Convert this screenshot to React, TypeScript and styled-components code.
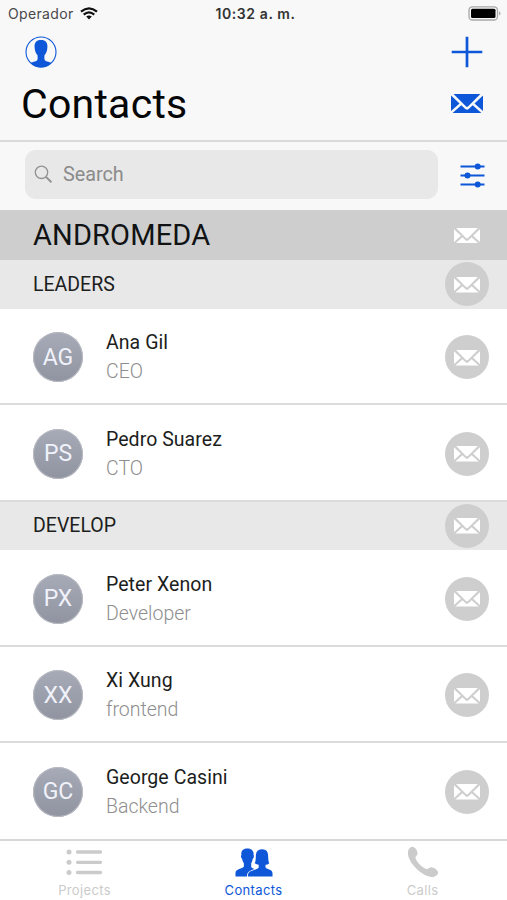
import React from "react";
import styled, { createGlobalStyle } from "styled-components";

const BLUE = "#0d57d8";

const GlobalStyle = createGlobalStyle`
  * { box-sizing: border-box; }
  body { margin: 0; background: #fff; font-family: Roboto, sans-serif; color: #1c1e20; }
`;

const Screen = styled.div`
  width: 507px;
  height: 900px;
  overflow: hidden;
  display: flex;
  flex-direction: column;
  background: #fff;
`;

const StatusBar = styled.div`
  flex: none;
  height: 28px;
  display: grid;
  grid-template-columns: 1fr auto 1fr;
  align-items: center;
  padding: 0 6px 1px 8px;
  background: #f8f8f8;
  font-family: Inter, sans-serif;
  font-size: 14px;
  color: #48484a;
`;

const Carrier = styled.div`
  display: flex;
  align-items: center;
  gap: 6px;
  letter-spacing: 0.35px;
`;

const Clock = styled.div`
  font-weight: 600;
  letter-spacing: 0.6px;
  color: #333;
  padding-left: 2px;
`;

const BatterySlot = styled.div`
  display: flex;
  justify-content: flex-end;
`;

const Header = styled.header`
  flex: none;
  height: 114px;
  background: #f8f8f8;
  border-bottom: 2px solid #dadada;
  padding: 8px 24px 0 21px;
`;

const HeaderRow = styled.div<{ $height: number }>`
  display: flex;
  align-items: center;
  justify-content: space-between;
  height: ${(p) => p.$height}px;
`;

const IconButton = styled.button<{ $inset?: number }>`
  display: flex;
  padding: 0;
  margin-left: ${(p) => p.$inset ?? 0}px;
  border: 0;
  background: none;
`;

const Title = styled.h1`
  margin: 0;
  font-size: 41px;
  line-height: 48px;
  font-weight: 400;
  letter-spacing: 0.25px;
  color: #050607;
`;

const SearchRow = styled.div`
  flex: none;
  height: 68px;
  display: flex;
  align-items: flex-start;
  justify-content: space-between;
  padding: 8px 22px 0 25px;
  background: #f8f8f8;
`;

const SearchField = styled.div`
  width: 413px;
  height: 49px;
  border-radius: 11px;
  background: #e8e8e8;
  display: flex;
  align-items: center;
  gap: 10px;
  padding: 0 9px;
  font-size: 19.8px;
  color: #8b8b8b;
`;

const FilterSlot = styled.div`
  padding-top: 12px;
`;

const Band = styled.div<{ $major?: boolean }>`
  flex: none;
  height: ${(p) => (p.$major ? 50 : 48.5)}px;
  display: flex;
  align-items: center;
  justify-content: space-between;
  padding: 0 18px 0 33px;
  background: ${(p) => (p.$major ? "#cecece" : "#e8e8e8")};
  font-size: ${(p) => (p.$major ? 29 : 19.5)}px;
  color: ${(p) => (p.$major ? "#101213" : "#1c1e20")};
`;

const Label = styled.span<{ $spacing?: number }>`
  letter-spacing: ${(p) => p.$spacing ?? 0}px;
`;

const MailButton = styled.button`
  width: 44px;
  height: 44px;
  flex: none;
  border: 0;
  padding: 1px 0 0;
  border-radius: 50%;
  background: #cecece;
  display: flex;
  align-items: center;
  justify-content: center;
`;

const ContactRow = styled.div`
  flex: none;
  height: 96.5px;
  display: flex;
  align-items: center;
  padding: 3px 18px 0 33px;
  border-bottom: 2px solid #dcdcdc;

  &:nth-last-child(2) {
    border-bottom-color: transparent;
  }
`;

const Avatar = styled.div`
  width: 50px;
  height: 50px;
  border-radius: 50%;
  display: flex;
  align-items: center;
  justify-content: center;
  background: linear-gradient(#a7abb7, #9094a0);
  box-shadow: inset 0 0 0 1px #b9bbc3;
  color: #f0f2fb;
  font-size: 23px;
`;

const Person = styled.div`
  flex: 1;
  padding-left: 23px;
  font-size: 19.5px;
  line-height: 29px;
`;

const Role = styled.div`
  font-weight: 300;
  color: #8e8e8e;
`;

const TabBar = styled.nav`
  flex: none;
  height: 62px;
  margin-top: -1px;
  border-top: 2px solid #d8d8d8;
  display: grid;
  grid-template-columns: repeat(3, 1fr);
  align-content: start;
  padding-top: 4px;
`;

const Tab = styled.div<{ $active?: boolean }>`
  display: flex;
  flex-direction: column;
  align-items: center;
  color: ${(p) => (p.$active ? BLUE : "#cbcbcb")};
  font-family: Inter, sans-serif;
  font-size: 13px;
  line-height: 18px;
  letter-spacing: 0.35px;
`;

const TabIcon = styled.div`
  height: 36px;
  display: flex;
  align-items: center;
  padding-bottom: 1px;
`;

const MailIcon = ({ width, color }: { width: number; color: string }) => (
  <svg width={width} height={width * 0.6} viewBox="0 0 32 19" fill={color}>
    <path d="M2.600 0H29.400L17.200 12.100Q16 13.100 14.800 12.100Z" />
    <path d="M0 1.400 8.500 9.400 0 17Z" />
    <path d="M32 1.400 23.500 9.400 32 17Z" />
    <path d="M1.600 19 10.300 11.200 14.300 14.900Q16 16.200 17.700 14.900L21.700 11.200 30.400 19Z" />
  </svg>
);

const WifiIcon = () => (
  <svg width="18" height="13" viewBox="0 0 18 13" fill="none" stroke="#111" strokeWidth="2.200">
    <path d="M1 4.700Q9-2 17 4.700M3.700 7.700Q9 3.200 14.300 7.700" />
    <path d="M6.200 9.500Q9 7.300 11.800 9.500L9 12.500Z" fill="#111" stroke="none" />
  </svg>
);

const BatteryIcon = () => (
  <svg width="33" height="15" viewBox="0 0 33 15">
    <rect x="1" y=".8" width="28.500" height="13.200" rx="3.500" fill="#f8f8f8" stroke="#a7a7a7" strokeWidth="1.300" />
    <rect x="3" y="2.800" width="24.500" height="9.200" rx="1.500" fill="#000" />
    <path d="M31 5.300Q34 7.400 31 9.500Z" fill="#aaa" />
  </svg>
);

const ProfileIcon = () => (
  <svg width="32" height="32" viewBox="0 0 32 32" fill={BLUE}>
    <circle cx="16" cy="16" r="15" fill="none" stroke={BLUE} strokeWidth="1.100" />
    <path d="M16 4C20.800 4 22.700 6.700 22.400 11.200C22.300 15 20.800 17.800 19.400 19.600V23.200C20 25.700 24 25.600 26.700 26.800Q22 31.500 16 31.500T5.300 26.800C8 25.600 12 25.700 12.600 23.200V19.600C11.200 17.800 9.700 15 9.600 11.200C9.300 6.700 11.200 4 16 4Z" />
  </svg>
);

const PlusIcon = () => (
  <svg width="32" height="32" viewBox="0 0 32 32" stroke={BLUE} strokeWidth="2.700">
    <path d="M.7 16H31.300M16 .7V31.300" />
  </svg>
);

const SearchIcon = () => (
  <svg width="19" height="19" viewBox="0 0 19 19" fill="none" stroke="#929292">
    <circle cx="7.500" cy="7.300" r="6.200" strokeWidth="1.300" />
    <path d="M12 11.900 17.400 17.300" strokeWidth="2" />
  </svg>
);

const FilterIcon = () => (
  <svg width="25" height="27" viewBox="0 0 25 27" fill={BLUE}>
    <path d="M.5 4.500H24.500M.5 13.500H24.500M.5 22.500H24.500" stroke={BLUE} strokeWidth="1.800" />
    <circle cx="17.700" cy="4.500" r="3" />
    <circle cx="7.500" cy="13.500" r="3" />
    <circle cx="17.700" cy="22.500" r="3" />
  </svg>
);

const ListIcon = () => (
  <svg width="37" height="28" viewBox="0 0 37 28" fill="#cbcbcb" stroke="#cbcbcb">
    <path d="M11.500 4H34.500M11.500 14.300H34.500M11.500 24.500H34.500" strokeWidth="3.300" strokeLinecap="round" />
    <g stroke="none">
      <circle cx="3" cy="4" r="2.500" />
      <circle cx="3" cy="14.300" r="2.500" />
      <circle cx="3" cy="24.500" r="2.500" />
    </g>
  </svg>
);

const PeopleIcon = () => (
  <svg width="38" height="29" viewBox="0 0 38 29" fill={BLUE}>
    <path d="M12.300.5C16.800.5 18.900 3 18.600 7C19.400 8 18.700 10 17.900 10.600C17.500 13 16.600 14.300 16.200 15.500V19C17 20.500 19.500 20.500 20.500 22.500V28.500H.5V25C.5 20.500 7.500 21 8.900 18.500V15.500C7.900 13.500 7.300 12.500 7 10.600C6.100 10 5.500 8 6.400 7C5.900 2.700 8 .5 12.300.5Z" />
    <path d="M27 1.300C32.700 1.300 33.100 5.500 33.200 9.200C33.300 12.500 33.600 14 34.300 15.200Q32.500 16.800 30.500 16.700V19.500C32.500 21.500 37.500 21.300 37.500 25.500V28.500H13V27C13 22 22 22.500 23.700 19.500V16.700Q21.500 16.600 19.700 15.200C20.500 14 20.700 12 20.800 9.200C20.900 5 21.500 1.300 27 1.300Z" stroke="#fff" strokeWidth="1.800" paintOrder="stroke" />
  </svg>
);

const PhoneIcon = () => (
  <svg width="32" height="32" viewBox="0 0 32 32" fill="#cbcbcb">
    <path d="M4.200 1.100C7.500-.4 11.500 5.800 10.300 8.500C9.500 10.200 8.100 10.500 8.600 12.200C10.100 16.800 15.500 21.700 19.700 23.100C21.300 23.500 21.700 21.600 23.800 21.300C26.700 21 31.500 24.600 31.100 27C30.700 29.400 27 31.500 24 30.900C14.800 29.800 2.200 17.500 1 8.500C.6 5 1.500 2.300 4.200 1.100Z" />
  </svg>
);

interface ContactProps {
  initials: string;
  name: string;
  role: string;
}

const Contact = ({ initials, name, role }: ContactProps) => (
  <ContactRow>
    <Avatar>{initials}</Avatar>
    <Person>
      <div><Label $spacing={0.05}>{name}</Label></div>
      <Role><Label>{role}</Label></Role>
    </Person>
    <MailButton aria-label={`Email ${name}`}><MailIcon width={26} color="#fff" /></MailButton>
  </ContactRow>
);

const Group = ({ name, major, spacing }: { name: string; major?: boolean; spacing?: number }) => (
  <Band $major={major}>
    <Label $spacing={spacing}>{name}</Label>
    <MailButton aria-label={`Email ${name}`}><MailIcon width={26} color="#fff" /></MailButton>
  </Band>
);

export default function App() {
  return (
    <Screen>
      <GlobalStyle />
      <StatusBar>
        <Carrier>Operador <WifiIcon /></Carrier>
        <Clock>10:32 a. m.</Clock>
        <BatterySlot><BatteryIcon /></BatterySlot>
      </StatusBar>
      <Header>
        <HeaderRow $height={32}>
          <IconButton $inset={4} aria-label="Profile"><ProfileIcon /></IconButton>
          <IconButton aria-label="Add contact"><PlusIcon /></IconButton>
        </HeaderRow>
        <HeaderRow $height={72}>
          <Title>Contacts</Title>
          <IconButton aria-label="Email everyone"><MailIcon width={32} color={BLUE} /></IconButton>
        </HeaderRow>
      </Header>
      <SearchRow>
        <SearchField><SearchIcon /><Label>Search</Label></SearchField>
        <FilterSlot><FilterIcon /></FilterSlot>
      </SearchRow>
      <Group name="ANDROMEDA" major spacing={0.15} />
      <Group name="LEADERS" />
      <Contact initials="AG" name="Ana Gil" role="CEO" />
      <Contact initials="PS" name="Pedro Suarez" role="CTO" />
      <Group name="DEVELOP" />
      <Contact initials="PX" name="Peter Xenon" role="Developer" />
      <Contact initials="XX" name="Xi Xung" role="frontend" />
      <Contact initials="GC" name="George Casini" role="Backend" />
      <TabBar>
        <Tab><TabIcon><ListIcon /></TabIcon>Projects</Tab>
        <Tab $active><TabIcon><PeopleIcon /></TabIcon>Contacts</Tab>
        <Tab><TabIcon><PhoneIcon /></TabIcon>Calls</Tab>
      </TabBar>
    </Screen>
  );
}
